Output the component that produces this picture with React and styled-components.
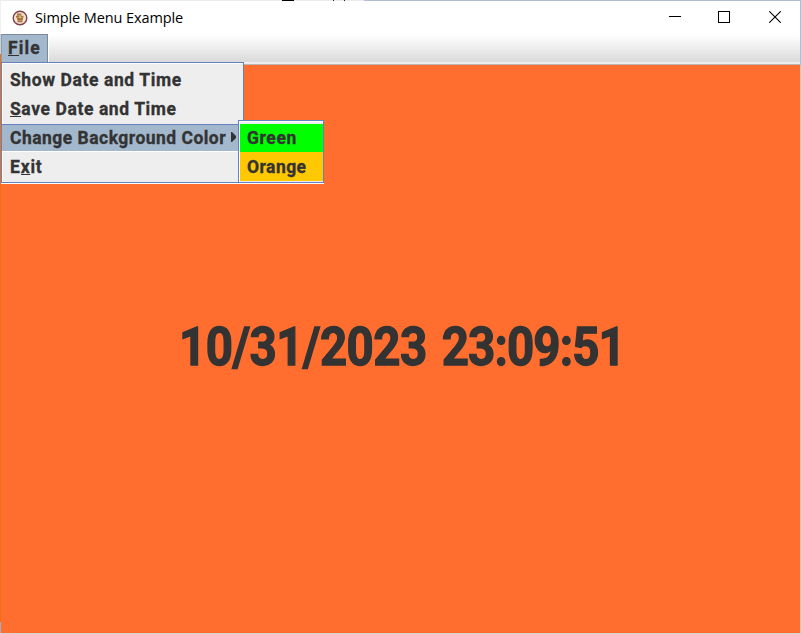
import React from "react";
import styled, { createGlobalStyle } from "styled-components";

const GlobalStyle = createGlobalStyle`
  * { box-sizing: border-box; }
  body { margin: 0; overflow: hidden; }
`;

const Window = styled.div`
  position: relative;
  width: 801px;
  height: 634px;
  display: grid;
  grid-template-columns: 1px 799px 1px;
  grid-template-rows: 1px 632px 1px;
  background: #b6c1d4;
  overflow: hidden;
`;

const TopEdge = styled.div`
  grid-column: 1 / 4;
  background: linear-gradient(90deg,
    #ececec 282px, #000 282px 294px, #ececec 294px 333px, #222 333px 334px,
    #ececec 334px 344px, #222 344px 345px, #ececec 345px 364px, #b0bdd4 364px);
`;

const LeftEdge = styled.div`
  background: linear-gradient(180deg, #f0f0f0 33px, #ccd0d4 33px 53px, #ed7115 53px 621px, #9fb0c6 621px);
`;

const RightEdge = styled.div`
  background: linear-gradient(180deg, #b0bdd4 64px, #d6c4bd 64px);
`;

const BottomEdge = styled.div`
  grid-column: 1 / 4;
  background: #d8d0cc;
`;

const Frame = styled.div`
  display: flex;
  flex-direction: column;
  background: #ff6e2f;
`;

const TitleBar = styled.header`
  height: 33px;
  display: flex;
  align-items: center;
  background: #fff;
  padding-left: 11px;
`;

const Title = styled.span`
  flex: 1;
  margin-left: 7px;
  font: 14.5px/20px "Open Sans", sans-serif;
  letter-spacing: -0.1px;
  color: #000;
`;

const Controls = styled.div`
  display: flex;
  height: 33px;
`;

const ControlButton = styled.button`
  width: ${(p) => p.$w || 50}px;
  height: 32px;
  padding: 0;
  border: 0;
  background: none;
  display: grid;
  place-items: center;
`;

const MenuBar = styled.nav`
  height: 31px;
  display: flex;
  background: linear-gradient(180deg, #fff 0, #fbfbfb 4px, #dadada 28px, #eee 28px 30px, #b8b8b8 30px);
`;

const MenuButton = styled.div`
  display: flex;
  width: 47px;
  height: 28px;
  padding-left: 6px;
  background: #a3b8cc;
  border: 1px solid #7a8a99;
  border-bottom: 0;
  border-left-color: #8b9fb5;
  box-shadow: 1px 0 #fff;
`;

const Label = styled.span`
  display: inline-block;
  font: 700 19px/27px Roboto, sans-serif;
  line-height: ${(p) => p.$line || 27}px;
  letter-spacing: ${(p) => p.$track || 0}px;
  transform: scaleX(0.92);
  transform-origin: 0 50%;
  -webkit-text-stroke: 0.35px #333;
  color: #333;
  white-space: pre;
`;

const Mnemonic = styled.span`
  display: inline-block;
  height: ${(p) => p.$h || 22}px;
  line-height: inherit;
  vertical-align: top;
  border-bottom: 1px solid #333;
`;

const Popup = styled.div`
  position: absolute;
  left: ${(p) => p.$x}px;
  top: ${(p) => p.$y}px;
  width: ${(p) => p.$w}px;
  height: ${(p) => p.$h}px;
  padding-top: 3px;
  background: #eee;
  border: 1px solid #6382bf;
  box-shadow: inset 1px 1px #fff, 0 1px #fff;
`;

const Item = styled.div`
  position: relative;
  display: flex;
  height: ${(p) => p.$h || 29}px;
  padding-left: ${(p) => (p.$inset ? 7 : 8)}px;
  margin-left: ${(p) => p.$inset || 0}px;
  padding-top: ${(p) => p.$top || 0}px;
  background: ${(p) => p.$bg || "transparent"};
  box-shadow: ${(p) => (p.$active ? "inset 0 1px #6382bf, inset 0 -1px #fff" : "none")};
`;

const Arrow = styled.svg`
  position: absolute;
  left: 229px;
  top: 8px;
`;

const Content = styled.main`
  flex: 1;
  display: flex;
  align-items: center;
  padding-left: 178px;
`;

const Clock = styled.div`
  font: 700 54px/64px Roboto, sans-serif;
  color: #333;
  white-space: nowrap;
  -webkit-text-stroke: 1.3px #333;
  transform: scaleX(0.88);
  transform-origin: 0 50%;
  margin-top: -4px;
`;

const ClockPart = styled.span`
  letter-spacing: ${(p) => p.$track}px;
  margin-left: ${(p) => p.$gap || 0}px;
`;

function CookieIcon() {
  return (
    <svg width="16" height="16" viewBox="0 0 16 16">
      <circle cx="8" cy="8" r="6.8" fill="#efe5d9" stroke="#83404b" strokeWidth="1.4" />
      <path d="M5 4.5h4.5M4 6.8h3.5M8.5 6.8h3M5 9h6M5.5 11.3h5" stroke="#ae7431" strokeWidth="1.9" />
    </svg>
  );
}

export default function App() {
  return (
    <>
      <GlobalStyle />
      <Window>
        <TopEdge />
        <LeftEdge />
        <Frame>
          <TitleBar>
            <CookieIcon />
            <Title>Simple Menu Example</Title>
            <Controls>
              <ControlButton $w={46} aria-label="Minimize">
                <svg width="12" height="12"><path d="M0 5.5h12" stroke="#000" /></svg>
              </ControlButton>
              <ControlButton $w={52} aria-label="Maximize">
                <svg width="12" height="12"><rect x=".5" y=".5" width="11" height="11" fill="none" stroke="#000" /></svg>
              </ControlButton>
              <ControlButton $w={50} aria-label="Close">
                <svg width="12" height="12"><path d="M.3.3l11.4 11.4M11.7.3L.3 11.7" stroke="#000" strokeWidth="1.1" /></svg>
              </ControlButton>
            </Controls>
          </TitleBar>
          <MenuBar>
            <MenuButton><Label $track={1.2} $line={25}><Mnemonic $h={21}>F</Mnemonic>ile</Label></MenuButton>
          </MenuBar>
          <Content>
            <Clock>
              <ClockPart $track={-0.65}>10/31/2023</ClockPart>
              <ClockPart $track={-1} $gap={17}>23:09:51</ClockPart>
            </Clock>
          </Content>
        </Frame>
        <RightEdge />
        <BottomEdge />

        <Popup $x={1} $y={62} $w={243} $h={121}>
          <Item><Label $track={0.65}>Show Date and Time</Label></Item>
          <Item><Label $track={0.65}><Mnemonic>S</Mnemonic>ave Date and Time</Label></Item>
          <Item $h={28} $bg="#a3b8cc" $active>
            <Label $track={0.53}>Change Background Color</Label>
            <Arrow width="5" height="10"><path d="M0 0h1l4 4v2l-4 4H0z" fill="#333" /></Arrow>
          </Item>
          <Item $top={1}><Label $track={0.9}>E<Mnemonic>x</Mnemonic>it</Label></Item>
        </Popup>
        <Popup $x={238} $y={120} $w={86} $h={63}>
          <Item $inset={1} $h={28} $bg="#00ff00"><Label $track={0.65}>Green</Label></Item>
          <Item $inset={1} $top={1} $bg="#ffc800"><Label $track={0.5}>Orange</Label></Item>
        </Popup>
      </Window>
    </>
  );
}
